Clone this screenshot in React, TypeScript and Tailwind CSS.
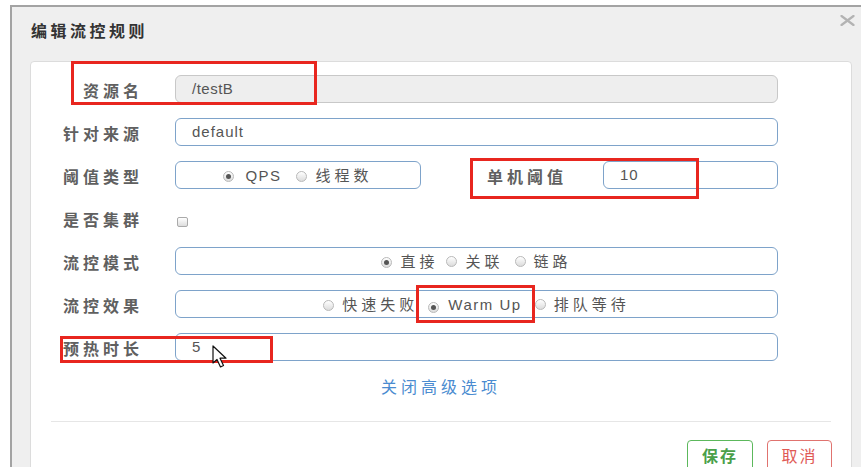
import React from "react";

const Radio = ({ checked }: { checked?: boolean }) => (
  <span className="inline-flex w-[11px] h-[11px] shrink-0 items-center justify-center rounded-full border border-[#b9b9b9] bg-gradient-to-b from-[#ffffff] to-[#dcdcdc]">
    {checked && <span className="w-[5px] h-[5px] rounded-full bg-[#555]" />}
  </span>
);

const Label = ({ children, w = "w-[112px]" }: { children: React.ReactNode; w?: string }) => (
  <div className={`${w} shrink-0 text-right text-[16px] font-bold tracking-[4px] text-[#606060] pt-[5px] leading-[20px]`}>
    {children}
  </div>
);

const RedBox = ({ cls }: { cls: string }) => (
  <div className={`absolute border-[3px] border-[#e8261f] ${cls}`} />
);

export default function App() {
  return (
    <div className="relative w-[861px] h-[475px] bg-white overflow-hidden font-['Liberation_Sans','Noto_Sans_CJK_SC',sans-serif]">
      <div className="relative ml-[10px] mt-[5px] h-[462px] border-l-2 border-t-2 border-[#a3a3a3] bg-[#efefef] flex flex-col overflow-hidden">
        <div className="h-[50px] shrink-0 flex items-center pl-[19px]">
          <span className="text-[16px] font-bold tracking-[3.5px] text-[#333]">编辑流控规则</span>
        </div>
        <svg className="absolute right-[6px] top-[8px]" width="15" height="11" viewBox="0 0 15 11">
          <path d="M1.5 1 L13.5 10 M13.5 1 L1.5 10" stroke="#b3b3b3" strokeWidth="2.2" strokeLinecap="round" />
        </svg>

        <div className="ml-[18px] mt-[4px] w-[822px] flex-1 bg-white border border-[#dcdcdc] rounded-t-[4px] flex flex-col">
          <div className="pt-[13px] flex flex-col gap-[15px]">
            {/* 资源名 */}
            <div className="flex items-center h-[28px]">
              <Label>资源名</Label>
              <div className="ml-[32px] w-[603px] h-[28px] rounded-[6px] border border-[#c8c8c8] bg-[#eeeeee] px-[16px] flex items-center text-[15px] tracking-[0.5px] text-[#555]">
                /testB
              </div>
            </div>
            {/* 针对来源 */}
            <div className="flex items-center h-[28px]">
              <Label>针对来源</Label>
              <div className="ml-[32px] w-[603px] h-[28px] rounded-[6px] border border-[#7ea3ca] bg-white px-[16px] flex items-center text-[15px] tracking-[1px] text-[#555]">
                default
              </div>
            </div>
            {/* 阈值类型 */}
            <div className="flex items-center h-[28px]">
              <Label>阈值类型</Label>
              <div className="ml-[32px] w-[246px] h-[28px] rounded-[6px] border border-[#7ea3ca] bg-white flex items-center justify-center pt-[3px] text-[#555]">
                <Radio checked />
                <span className="ml-[11px] text-[15px] tracking-[1.5px]">QPS</span>
                <span className="ml-[14px]"><Radio /></span>
                <span className="ml-[9px] text-[15px] tracking-[4px]">线程数</span>
              </div>
              <div className="ml-[66px] shrink-0 text-[16px] font-bold tracking-[4px] text-[#606060] pt-[5px] leading-[20px]">单机阈值</div>
              <div className="ml-[36px] w-[175px] h-[28px] rounded-[6px] border border-[#7ea3ca] bg-white px-[16px] flex items-center text-[15px] tracking-[1px] text-[#555]">
                10
              </div>
            </div>
            {/* 是否集群 */}
            <div className="flex items-center h-[28px]">
              <Label>是否集群</Label>
              <div className="ml-[34px] mt-[7px] w-[11px] h-[10px] rounded-[2px] border border-[#aaaaaa] bg-gradient-to-b from-[#ffffff] to-[#dddddd]" />
            </div>
            {/* 流控模式 */}
            <div className="flex items-center h-[28px]">
              <Label>流控模式</Label>
              <div className="ml-[32px] w-[603px] h-[28px] rounded-[6px] border border-[#7ea3ca] bg-white flex items-center justify-center pt-[2px] text-[15px] tracking-[4px] text-[#555]">
                <Radio checked />
                <span className="ml-[8px]">直接</span>
                <span className="ml-[8px]"><Radio /></span>
                <span className="ml-[8px]">关联</span>
                <span className="ml-[11px]"><Radio /></span>
                <span className="ml-[8px]">链路</span>
              </div>
            </div>
            {/* 流控效果 */}
            <div className="flex items-center h-[28px]">
              <Label>流控效果</Label>
              <div className="ml-[32px] w-[603px] h-[28px] rounded-[6px] border border-[#7ea3ca] bg-white flex items-center justify-center pt-[2px] text-[15px] text-[#555]">
                <Radio />
                <span className="ml-[8px] tracking-[4px]">快速失败</span>
                <span className="ml-[10px]"><Radio checked /></span>
                <span className="ml-[9px] tracking-[1.5px]">Warm Up</span>
                <span className="ml-[13px]"><Radio /></span>
                <span className="ml-[8px] tracking-[4px]">排队等待</span>
              </div>
            </div>
            {/* 预热时长 */}
            <div className="flex items-center h-[28px]">
              <Label>预热时长</Label>
              <div className="ml-[32px] w-[603px] h-[28px] rounded-[6px] border border-[#7ea3ca] bg-white px-[16px] flex items-center text-[15px] tracking-[1px] text-[#555]">
                5
              </div>
            </div>
          </div>

          <div className="mt-[17px] h-[20px] leading-[20px] text-center text-[16px] tracking-[4px] text-[#4a8bd0]">
            关闭高级选项
          </div>

          <div className="mt-[23px] mx-[20px] h-px bg-[#e6e6e6]" />

          <div className="mt-[18px] flex justify-end pr-[19px] gap-[14px]">
            <div className="w-[66px] h-[34px] rounded-[4px] border border-[#5cb85c] flex items-center justify-center text-[16px] font-bold tracking-[2px] text-[#4aa04a]">
              保存
            </div>
            <div className="w-[65px] h-[34px] rounded-[4px] border border-[#e0736f] flex items-center justify-center text-[16px] tracking-[2px] text-[#e05a55]">
              取消
            </div>
          </div>
        </div>
      </div>

      <RedBox cls="left-[71px] top-[61px] w-[246px] h-[44px]" />
      <RedBox cls="left-[470px] top-[158px] w-[229px] h-[41px]" />
      <RedBox cls="left-[416px] top-[285px] w-[119px] h-[38px]" />
      <RedBox cls="left-[60px] top-[336px] w-[213px] h-[27px]" />

      <svg className="absolute left-[211px] top-[345px]" width="20" height="24" viewBox="0 0 20 24">
        <path d="M2 1 L2 18 L6 14.5 L9.5 22 L12.5 20.5 L9 13.2 L15 13.2 Z" fill="#fff" stroke="#111" strokeWidth="1.2" strokeLinejoin="round" />
      </svg>
    </div>
  );
}
